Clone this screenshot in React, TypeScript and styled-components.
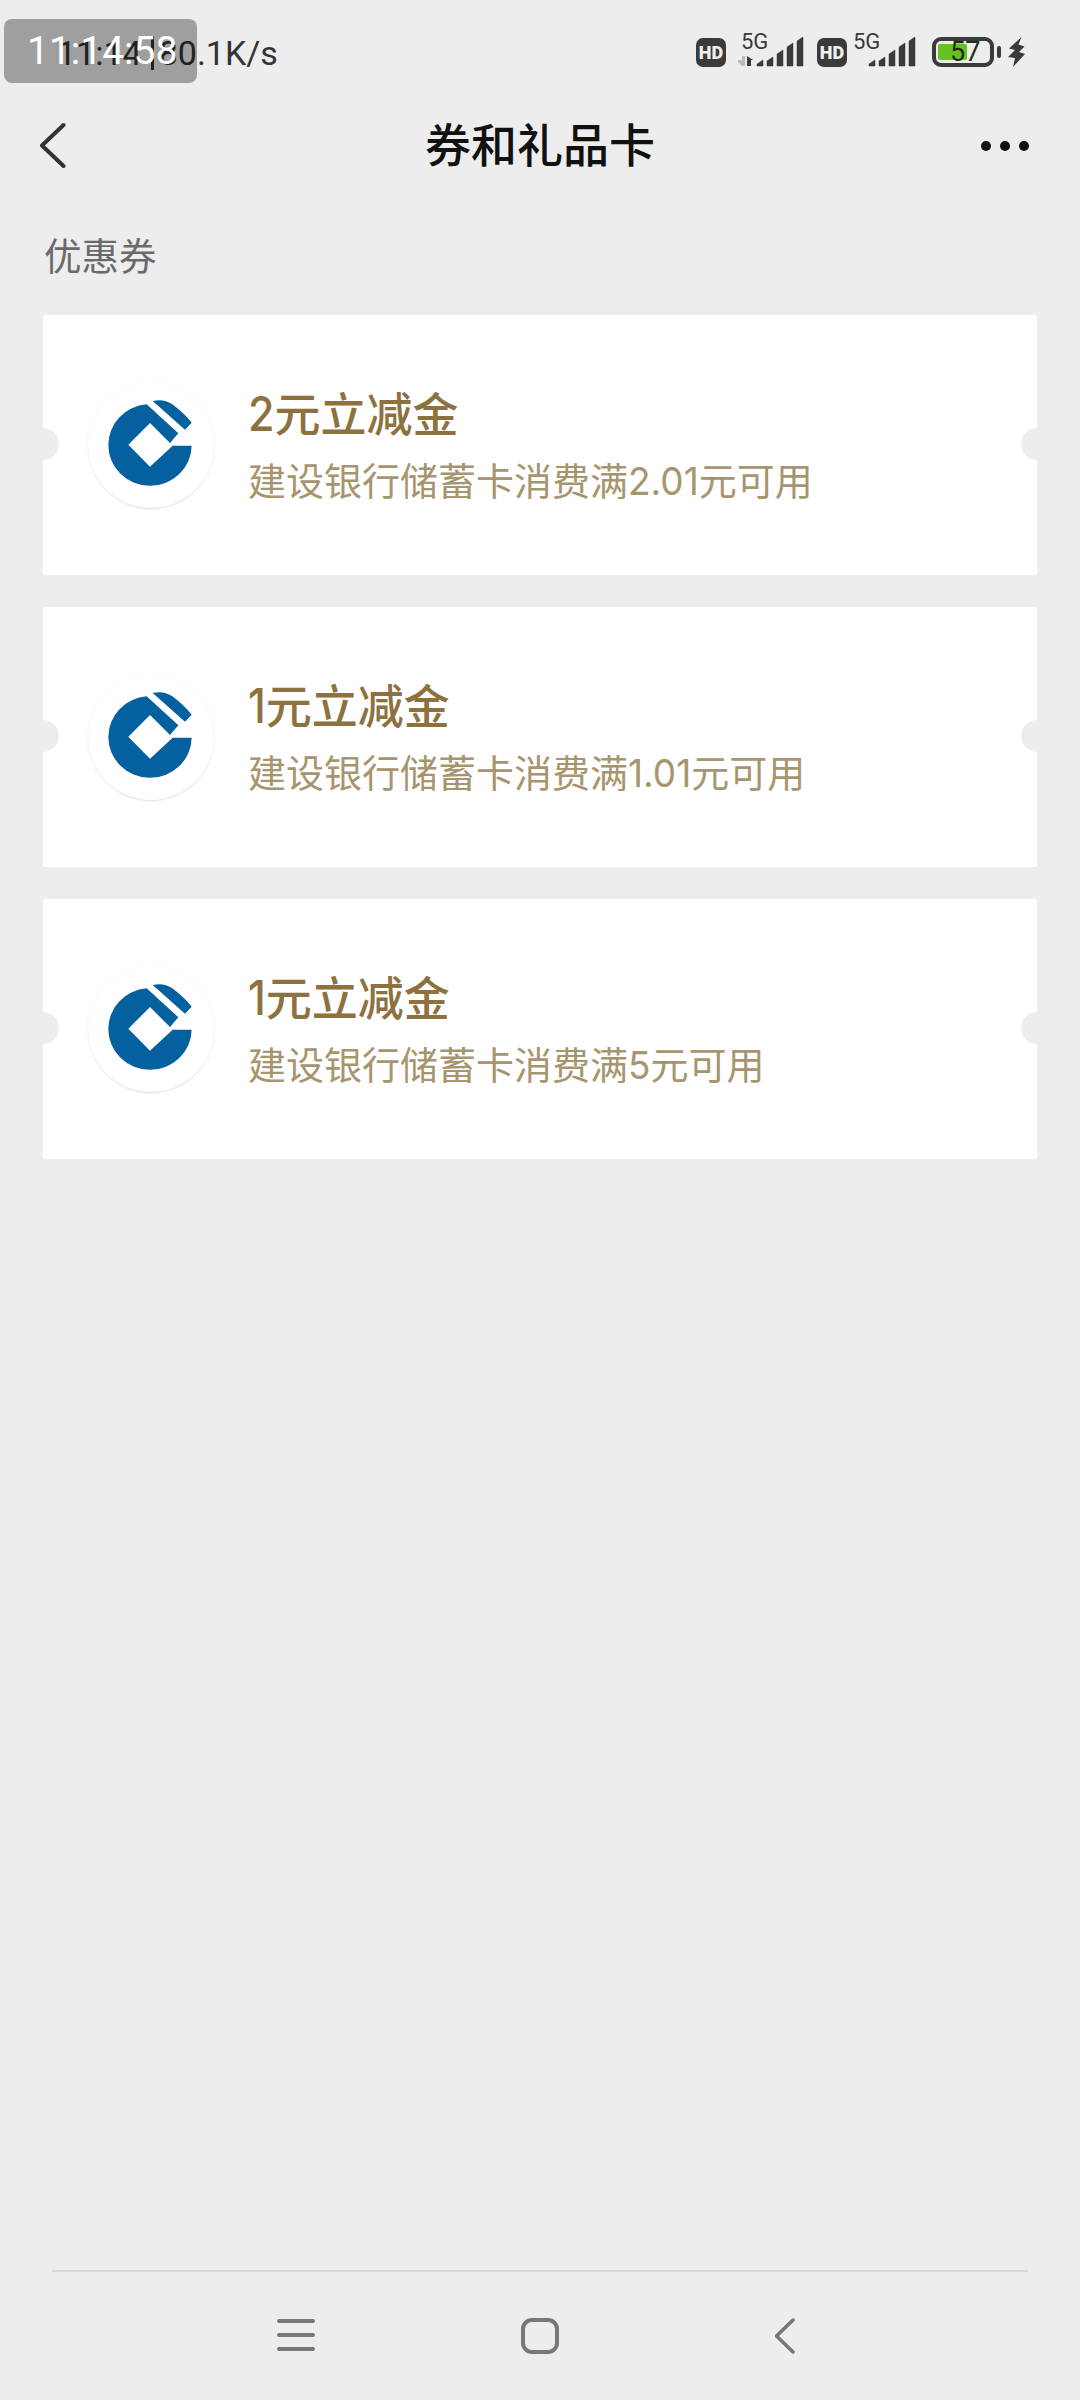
import React from "react";
import styled, { createGlobalStyle } from "styled-components";

const Global = createGlobalStyle`
  html, body { margin: 0; padding: 0; background: #ededed; }
  * { box-sizing: border-box; }
`;

const FONT = `Roboto, "Noto Sans CJK SC", sans-serif`;

const Page = styled.div`
  position: relative;
  width: 1080px;
  height: 2400px;
  display: flex;
  flex-direction: column;
  background: #ededed;
  font-family: ${FONT};
  overflow: hidden;
`;

const StatusBar = styled.div`
  height: 104px;
  display: flex;
  align-items: center;
  justify-content: space-between;
  padding: 0 55px 0 57px;
`;

const Speed = styled.div`
  display: flex;
  align-items: center;
  font-size: 34px;
  color: #333;
  white-space: nowrap;
  padding-top: 2px;
`;

const Divider = styled.span`
  width: 3px;
  height: 34px;
  background: #333;
  margin: 0 5px 0 9px;
`;

const StatusIcons = styled.div`
  display: flex;
  align-items: center;
`;

const Stamp = styled.div`
  position: absolute;
  left: 4px;
  top: 19px;
  width: 193px;
  height: 64px;
  padding-left: 23px;
  display: flex;
  align-items: center;
  border-radius: 8px;
  background: rgba(0, 0, 0, 0.33);
  color: #fff;
  font-size: 39px;
`;

const NavBar = styled.div`
  height: 84px;
  display: grid;
  grid-template-columns: 100px 1fr 100px;
  align-items: center;
  padding: 0 36px;
`;

const NavTitle = styled.div`
  text-align: center;
  font-size: 46px;
  font-weight: 500;
  color: #111;
  line-height: 60px;
`;

const NavEnd = styled.div`
  display: flex;
  justify-content: flex-end;
  padding-right: 14px;
`;

const Section = styled.div`
  margin-top: 44px;
  padding-left: 44px;
  height: 50px;
  line-height: 50px;
  font-size: 37.5px;
  color: #6a6a6a;
`;

const List = styled.div`
  margin: 33px 43px 0;
  display: flex;
  flex-direction: column;
  gap: 32px;
`;

const Card = styled.div`
  position: relative;
  height: 260px;
  padding-left: 45px;
  display: flex;
  align-items: center;
  gap: 34px;
  background: #fff;
  border-radius: 3px;
  overflow: hidden;

  &::before,
  &::after {
    content: "";
    position: absolute;
    top: 113px;
    width: 32px;
    height: 32px;
    border-radius: 50%;
    background: #ededed;
  }
  &::before { left: -16px; }
  &::after { right: -16px; }
`;

const LogoCircle = styled.div`
  width: 126px;
  height: 126px;
  flex: none;
  display: flex;
  align-items: center;
  justify-content: center;
  border-radius: 50%;
  background: #fff;
  box-shadow: 0 1px 2px rgba(0, 0, 0, 0.13);
`;

const CardText = styled.div`
  display: flex;
  flex-direction: column;
  margin-top: 2px;
`;

const CardTitle = styled.div`
  font-size: 46px;
  font-weight: 500;
  line-height: 60px;
  color: #8d723f;
`;

const CardSub = styled.div`
  font-size: 38px;
  line-height: 50px;
  color: #a6956e;
  margin-top: 12px;
`;

const Num = styled.span<{ $size: number; $stretch: number }>`
  display: inline-block;
  font-family: Inter, sans-serif;
  font-size: ${(p) => p.$size}px;
  line-height: 1;
  transform-origin: 50% 85%;
  transform: scaleY(${(p) => p.$stretch});
`;

const Footer = styled.div`
  margin: auto 52px 0;
  height: 130px;
  border-top: 2px solid #d9d9d9;
  padding: 46px 0 0 225px;
  display: flex;
  gap: 206px;
  align-items: flex-start;
`;

const Ic = styled.svg`
  display: block;
  flex: none;
`;

const Spaced = styled(Ic)<{ $ml?: number }>`
  margin-left: ${(p) => p.$ml ?? 0}px;
`;

const HD = ({ ml = 0 }: { ml?: number }) => (
  <Spaced $ml={ml} width="30" height="29" viewBox="0 0 30 29">
    <rect width="30" height="29" rx="7" fill="#3a3a3a" />
    <text x="15" y="20.5" textAnchor="middle" fontFamily="Roboto, sans-serif" fontWeight="900" fontSize="18" fill="#eee">HD</text>
  </Spaced>
);

const BARS = [
  [0, 60],
  [10, 57],
  [20, 50],
  [30, 43],
  [40, 37],
];

const Signal = ({ ml, arrows }: { ml: number; arrows?: boolean }) => (
  <Spaced $ml={ml} width="68" height="44" viewBox="737 30 68 44">
    <text x="741" y="49" fontFamily="Roboto, sans-serif" fontSize="22" fill="#3a3a3a">5G</text>
    {arrows && (
      <g>
        <path d="M738 60h4v-4h3v10h-3l-4-4z" fill="#bbb" />
        <path d="M747 56l6 4h-2v6h-4z" fill="#3a3a3a" />
      </g>
    )}
    {BARS.map(([dx, y]) => (
      <path
        key={dx}
        d={`M${757 + dx} ${y + 4}L${763 + dx} ${y}V66H${757 + dx}Z`}
        fill="#3a3a3a"
        stroke="#3a3a3a"
        strokeWidth="0.5"
        strokeLinejoin="round"
      />
    ))}
  </Spaced>
);

const BatteryWrap = styled.div`
  position: relative;
  width: 62px;
  height: 30px;
  margin-left: 15px;
  flex: none;
  border: 4px solid #3a3a3a;
  border-radius: 9px;
  &::after {
    content: "";
    position: absolute;
    right: -11px;
    top: 5px;
    width: 4px;
    height: 12px;
    border-radius: 2px;
    background: #3a3a3a;
  }
`;

const BatteryFill = styled.div`
  position: absolute;
  left: 2px;
  top: 3px;
  bottom: 3px;
  width: 29px;
  background: #66c223;
  border-radius: 2px;
`;

const BatteryText = styled.div`
  position: absolute;
  left: 14px;
  top: -4px;
  font-size: 27px;
  line-height: 30px;
  color: #1f2f14;
`;

const Logo = () => (
  <Ic width="126" height="126" viewBox="204 249 378 378">
    <path
      d="M380 316L475 403L450 432L390 372L325 437L390 503L458 440L515 440A125 122 0 0 1 265 437A125 122 0 0 1 380 316Z"
      fill="#04609f"
    />
    <path d="M398 306Q430 298 456 315Q490 340 515 371L495 392Z" fill="#04609f" />
  </Ic>
);

const coupons = [
  { amount: "2", limit: "2.01" },
  { amount: "1", limit: "1.01" },
  { amount: "1", limit: "5" },
];

export default function App() {
  return (
    <Page>
      <Global />
      <StatusBar>
        <Speed>
          11:14
          <Divider />
          80.1K/s
        </Speed>
        <StatusIcons>
          <HD />
          <Signal ml={11} arrows />
          <HD ml={12} />
          <Signal ml={2} />
          <BatteryWrap>
            <BatteryFill />
            <BatteryText>57</BatteryText>
          </BatteryWrap>
          <Spaced $ml={14} width="17" height="30" viewBox="0 0 17 30">
            <path d="M13.500 0L1 11.500L7 13L0 20L7 21L5 30L17 17L11 15L16.500 9.500L10.500 7.500Z" fill="#3a3a3a" />
          </Spaced>
        </StatusIcons>
      </StatusBar>
      <Stamp>11:14:58</Stamp>
      <NavBar>
        <Ic width="30" height="48" viewBox="0 0 30 48">
          <path d="M27.500 3L6 23.500L27.500 44" fill="none" stroke="#333" strokeWidth="4" strokeLinecap="round" strokeLinejoin="round" />
        </Ic>
        <NavTitle>券和礼品卡</NavTitle>
        <NavEnd>
          <Ic width="50" height="12" viewBox="0 0 50 12">
            <circle cx="6" cy="6" r="5" fill="#111" />
            <circle cx="25" cy="6" r="5" fill="#111" />
            <circle cx="44" cy="6" r="5" fill="#111" />
          </Ic>
        </NavEnd>
      </NavBar>
      <Section>优惠券</Section>
      <List>
        {coupons.map((c, i) => (
          <Card key={i}>
            <LogoCircle>
              <Logo />
            </LogoCircle>
            <CardText>
              <CardTitle>
                <Num $size={43} $stretch={1.12}>{c.amount}</Num>元立减金
              </CardTitle>
              <CardSub>
                建设银行储蓄卡消费满<Num $size={37} $stretch={1.05}>{c.limit}</Num>元可用
              </CardSub>
            </CardText>
          </Card>
        ))}
      </List>
      <Footer>
        <Ic width="38" height="34" viewBox="0 0 38 34">
          <path d="M2 3H36M2 17H36M2 31H36" stroke="#777" strokeWidth="4" strokeLinecap="round" />
        </Ic>
        <Ic width="38" height="36" viewBox="0 0 38 36">
          <rect x="2" y="2" width="34" height="32" rx="9" fill="none" stroke="#777" strokeWidth="4" />
        </Ic>
        <Spaced $ml={10} width="20" height="36" viewBox="0 0 20 36">
          <path d="M18 2L1.500 18L18 34" fill="none" stroke="#777" strokeWidth="3.500" strokeLinecap="round" strokeLinejoin="round" />
        </Spaced>
      </Footer>
    </Page>
  );
}
